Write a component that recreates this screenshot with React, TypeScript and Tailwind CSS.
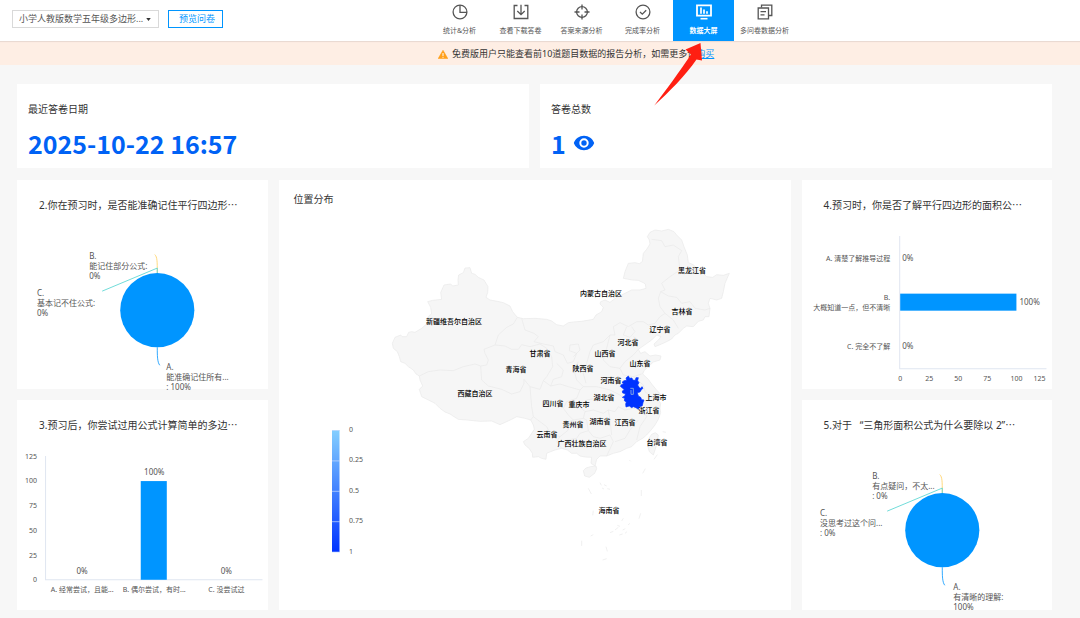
import React from "react";

const NAV = [
  { label: "统计&分析", icon: "pie" },
  { label: "查看下载答卷", icon: "download" },
  { label: "答案来源分析", icon: "target" },
  { label: "完成率分析", icon: "check" },
  { label: "数据大屏", icon: "screen", active: true },
  { label: "多问卷数据分析", icon: "docs" },
];

function NavIcon({ name }: { name: string }) {
  return (
    <svg viewBox="0 0 16 16" className="size-4" fill="none" stroke="currentColor" strokeWidth="1.3" aria-hidden="true">
      {name === "pie" && (
        <>
          <circle cx="8" cy="8" r="6.9" />
          <path d="M8 1v7.3h7" />
        </>
      )}
      {name === "download" && (
        <>
          <path d="M4.5 1.5H1.2v13h13.6v-13h-3.3" />
          <path d="M8 .8v9.6M4.3 7l3.7 3.6L11.700 7" />
        </>
      )}
      {name === "target" && (
        <>
          <circle cx="8" cy="8" r="5.4" />
          <path d="M8 .5v5M8 10.500v5M.5 8h5M10.500 8h5" />
        </>
      )}
      {name === "check" && (
        <>
          <circle cx="8" cy="8" r="6.9" />
          <path d="M5 8l2.300 2.200L11.200 6.200" />
        </>
      )}
      {name === "screen" && (
        <>
          <path d="M1 1.300h14v10.400H1z" strokeWidth="1.8" />
          <path d="M5 3.600v6.200M8 5.400v4.400M11 7.200v2.600" strokeWidth="1.700" />
          <path d="M4.500 14.700h7" strokeWidth="1.6" />
        </>
      )}
      {name === "docs" && (
        <>
          <path d="M4.500 3.500V1.200h10.300v10.300h-3" />
          <path d="M1.200 4h10.300v10.800H1.200z" />
          <path d="M3.500 7.600h5.500M3.500 10.800h4" />
        </>
      )}
    </svg>
  );
}

function Header() {
  return (
    <header className="relative z-10 flex h-[41px] items-start bg-white shadow">
      <div className="flex w-[429px] shrink-0 items-center gap-[9px] pt-[10px] pl-3">
        <div className="relative">
          <select
            aria-label="选择问卷"
            className="block h-[18px] w-[147px] appearance-none border border-[#d9d9d9] bg-white pl-[6px] text-[9px] leading-4 text-[#555]"
          >
            <option>小学人教版数学五年级多边形...</option>
          </select>
          <svg viewBox="0 0 6 4" className="pointer-events-none absolute top-[8px] right-[8px] h-[3px] w-[5px]" fill="#333" aria-hidden="true">
            <path d="M0 0h6L3 4z" />
          </svg>
        </div>
        <button type="button" className="h-[18px] w-[55px] border border-[#0095ff] pl-[3px] text-[9px] leading-4 text-[#0095ff]">
          预览问卷
        </button>
      </div>
      <nav className="flex">
        {NAV.map((item) => (
          <a
            key={item.label}
            href="#"
            className={
              item.active
                ? "flex h-[41px] w-[61px] flex-col items-center bg-[#0095ff] pt-1 text-[7px] leading-[10px] font-bold whitespace-nowrap text-white"
                : "flex h-[41px] w-[61px] flex-col items-center pt-1 text-[7px] leading-[10px] whitespace-nowrap text-[#555]"
            }
          >
            <NavIcon name={item.icon} />
            <span className="mt-[6px]">{item.label}</span>
          </a>
        ))}
      </nav>
    </header>
  );
}

function Banner() {
  return (
    <div className="relative z-20 flex h-6 items-center bg-[#feeee4] pt-[2px] pl-[438px] text-[9px] whitespace-nowrap text-[#333] shadow-[inset_0_2px_1px_-1px_#e8d8d0]">
      <svg viewBox="0 0 10 9" className="h-[9px] w-[10px]" aria-hidden="true">
        <path d="M5 .3 9.800 8.600H.2z" fill="#ff9f1a" stroke="#ff9f1a" strokeWidth=".6" strokeLinejoin="round" />
        <path d="M5 3v3M5 6.800v1" stroke="#fff" strokeWidth="1" />
      </svg>
      <p className="pl-1">
        免费版用户只能查看前10道题目数据的报告分析，如需更多请
        <a href="#" className="text-[#0095ff] underline">
          购买
        </a>
      </p>
      <svg viewBox="654 42 50 64" className="absolute top-px left-[654px] h-16 w-[50px]" aria-hidden="true">
        <path d="M700.500 43 685.500 49.500 691 54.500C680 71 666 90 654.300 105.500 669 92 685 76 696.500 59.500L702 60.500z" fill="#ff1f12" />
      </svg>
    </div>
  );
}

function Stat({ label, children }: { label: string; children: React.ReactNode }) {
  return (
    <section className="bg-white pt-[17px] pb-[9px] pl-[11px]">
      <h2 className="text-[10px] leading-4 text-[#333]">{label}</h2>
      <div className="mt-[10px] flex items-center gap-[7px] font-['Noto_Sans_CJK_SC',sans-serif] text-[25px] leading-8 font-bold text-[#0062f5]">
        {children}
      </div>
    </section>
  );
}

function ChartCard({ title, children }: { title: string; children: React.ReactNode }) {
  return (
    <section className="bg-white pt-[17px]">
      <h2 className="mb-[7px] truncate pl-[22px] text-[10px] leading-4 text-[#333]">{title}</h2>
      {children}
    </section>
  );
}

type PieLabel = { x: number; lines: string[] };

function PieChart({ a, b, c }: { a: PieLabel; b: PieLabel; c: PieLabel }) {
  const rows = [
    { ...b, y: 39 },
    { ...c, y: 76 },
    { ...a, y: 150 },
  ];
  return (
    <svg viewBox="0 0 250 169" className="block w-full overflow-visible text-[8px]" role="img">
      <path d="M137.500 34.500C140 37 140 41 140 53" fill="none" stroke="#ffd05c" strokeWidth=".8" />
      <path d="M140 53V48L85 71" fill="none" stroke="#4ed3d0" strokeWidth=".8" />
      <path d="M140 127C140 135 140 142 142.500 145" fill="none" stroke="#0095ff" strokeWidth=".8" />
      <circle cx="140" cy="90" r="37" fill="#0095ff" />
      {rows.map((row) => (
        <text key={row.y} fill="#555">
          {row.lines.map((line, i) => (
            <tspan key={i} x={row.x} y={row.y + i * 10}>
              {line}
            </tspan>
          ))}
        </text>
      ))}
    </svg>
  );
}

function ColumnChart() {
  const data = [
    { name: "A. 经常尝试，且能...", value: 0 },
    { name: "B. 偶尔尝试，有时...", value: 100 },
    { name: "C. 没尝试过", value: 0 },
  ];
  return (
    <svg viewBox="0 0 250 169" className="block w-full overflow-visible text-[8px]" fill="#555" role="img">
      <path d="M28.500 16v123.500H245" fill="none" stroke="#e0e6f1" />
      {[0, 25, 50, 75, 100, 125].map((t) => (
        <text key={t} x="20" y={142 - t * 0.988} textAnchor="end" className="text-[7px]">
          {t}
        </text>
      ))}
      {data.map((d, i) => (
        <g key={d.name} textAnchor="middle">
          <rect x={123.5 + (i - 1) * 72} y={139.5 - d.value * 0.985} width="26" height={d.value * 0.985} fill="#0095ff" />
          <text x={65 + i * 72} y={134 - d.value * 0.988}>
            {d.value}%
          </text>
          <text x={65 + i * 72} y="152" className="text-[7px]">
            {d.name}
          </text>
        </g>
      ))}
    </svg>
  );
}

function RowChart() {
  const data = [
    { lines: ["A. 清楚了解推导过程"], value: 0 },
    { lines: ["B.", "大概知道一点，但不清晰"], value: 100 },
    { lines: ["C. 完全不了解"], value: 0 },
  ];
  const ticks = [
    [0, 98],
    [25, 127],
    [50, 156],
    [75, 185],
    [100, 214],
    [125, 237],
  ];
  return (
    <svg viewBox="0 0 250 169" className="block w-full overflow-visible text-[8px]" fill="#555" role="img">
      <path d="M97.500 16v132.500H244" fill="none" stroke="#e0e6f1" />
      {ticks.map(([t, x]) => (
        <text key={t} x={x} y="161" textAnchor="middle" className="text-[7px]">
          {t}
        </text>
      ))}
      {data.map((d, i) => (
        <g key={i}>
          <rect x="98" y={73.5 + (i - 1) * 44} width={d.value * 1.16} height="17" fill="#0095ff" />
          <text x={100 + d.value * 1.17} y={85 + (i - 1) * 44}>
            {d.value}%
          </text>
          {d.lines.map((line, j) => (
            <text key={line} x="88" y={85 + (i - 1) * 44 + (j - (d.lines.length - 1) / 2) * 10} textAnchor="end" className="text-[7px]">
              {line}
            </text>
          ))}
        </g>
      ))}
    </svg>
  );
}

const PROVINCES: [string, number, number][] = [
  ["黑龙江省", 692, 270],
  ["内蒙古自治区", 601, 293],
  ["吉林省", 682, 311],
  ["辽宁省", 660, 329],
  ["新疆维吾尔自治区", 454, 321],
  ["河北省", 628, 342],
  ["甘肃省", 540, 353],
  ["山西省", 605, 353],
  ["山东省", 640, 363],
  ["青海省", 516, 369],
  ["陕西省", 583, 368],
  ["河南省", 611, 380],
  ["西藏自治区", 475, 393],
  ["湖北省", 604, 397],
  ["上海市", 656, 397],
  ["四川省", 553, 403],
  ["重庆市", 579, 404],
  ["浙江省", 649, 410],
  ["贵州省", 573, 424],
  ["湖南省", 600, 421],
  ["江西省", 625, 422],
  ["云南省", 547, 434],
  ["广西壮族自治区", 582, 443],
  ["台湾省", 657, 442],
  ["海南省", 609, 510],
];

const MAINLAND =
  "M37 370L45 352 62 345 66 350 80 350 86 337 95 335 105 337 125 325 142 310 148 298 146 288 155 282 152 262 143 245 158 241 185 238 182 218 192 195 212 192 218 198 235 195 234 180 236 165 250 158 255 144 270 143 275 160 285 163 295 172 312 180 324 200 323 218 318 232 330 240 352 244 370 248 390 258 398 275 412 292 430 296 465 295 500 298 515 303 530 314 550 318 565 308 580 306 605 304 640 298 648 285 665 275 670 262 660 252 662 245 675 240 690 247 710 232 725 225 755 210 780 210 798 205 796 192 790 188 775 181 757 180 730 175 735 155 745 130 765 128 778 131 787 125 790 100 800 88 810 72 808 60 802 50 810 37 825 30 845 33 865 28 882 35 890 45 905 60 912 80 922 105 925 128 940 134 950 145 965 155 980 170 998 172 1010 164 1030 166 1048 160 1035 190 1030 215 1025 235 1010 240 990 235 985 250 990 265 987 290 975 290 970 300 955 304 940 320 920 318 910 325 895 340 885 345 875 357 860 365 845 372 825 380 822 372 835 360 843 350 830 345 815 360 798 372 775 388 782 400 795 395 810 408 826 405 843 408 840 420 820 426 805 440 792 452 788 462 805 478 815 492 828 508 843 524 828 530 815 532 835 540 842 550 840 565 842 578 835 598 825 615 815 628 800 645 788 655 770 665 755 680 740 685 720 695 700 700 680 708 660 708 650 718 645 738 633 730 635 712 615 711 600 708 590 700 575 700 562 690 545 685 525 690 512 695 500 700 498 718 485 715 475 710 458 712 457 700 448 686 435 675 430 665 445 655 455 640 463 628 460 615 452 600 435 595 410 590 395 598 380 605 360 614 335 603 300 604 260 600 235 598 222 590 210 582 195 576 180 565 165 550 145 540 125 530 118 508 128 498 120 480 118 468 108 462 100 450 85 440 75 430 62 425 58 410 52 395 40 385z";

const BORDERS = [
  "M118 468L145 455 180 450 220 452 250 440 285 432 302 438",
  "M302 438L320 435 325 420 315 400 312 388 345 375 355 345 380 322 400 312 412 292",
  "M302 438L305 480 325 498 365 508 395 522 420 515 432 490 432 478",
  "M345 375L375 378 395 388 415 388 425 374 450 380 480 372 500 385 515 410 518 440 500 470 490 482 512 498 520 478 545 470 550 450 530 430",
  "M425 295L435 330 462 340 475 350 462 365 490 372 520 378 525 395 550 405 562 430 580 425 590 400 568 392 570 375 595 372 600 390 580 410",
  "M432 478L450 500 480 508 490 482M450 500L455 560 460 590 452 600",
  "M512 498L540 492 565 500 600 510 610 500 590 480 582 450 595 425",
  "M460 590L480 605 500 620 510 640 540 650 565 630 555 610 580 600",
  "M600 510L590 535 560 545 550 565 565 585 580 600 610 595 615 575 600 560 620 540 648 535",
  "M610 500L650 500 690 510 720 525 735 540M630 395L620 430 610 460 618 490",
  "M630 395L640 375 670 365 690 345 705 345 700 320 720 308 745 320 770 305 790 305 805 315",
  "M690 345L680 385 670 420 690 440 720 445 735 425 760 405 775 388M720 445L730 465",
  "M740 320L730 345 750 352 765 335 755 320M775 360L760 350",
  "M805 315L825 310 840 290 855 280 840 260 835 235 842 215 855 210 845 190 870 170 900 150 895 110 905 92 880 75 855 80 845 62 815 58",
  "M842 215L865 228 890 232 905 250 930 245 945 265 975 270 990 265",
  "M855 280L880 300 895 325M730 465L760 470 785 462M760 470L790 495 795 515 815 532",
  "M555 680L560 660 590 655 600 640 625 632 640 650 660 655 690 645 700 665 680 708",
  "M615 575L640 570 670 580 685 570 705 575 715 560 735 570M625 632L620 600 610 595M685 570L690 600 695 645",
  "M735 570L760 565 790 570 800 590 780 620 770 660M705 665L735 655 750 630 775 600",
  "M545 685L530 665 540 650",
];

const ANHUI =
  "M745 468L749 475 756 474 758 480 766 481 768 473 775 473 773 482 777 488 773 495 778 503 782 505 786 500 789 505 784 509 780 516 772 518 775 528 782 532 785 539 792 540 789 548 787 557 779 560 775 568 768 563 760 560 755 563 748 558 738 561 737 552 739 546 733 542 734 535 727 532 735 527 736 521 728 519 727 513 733 509 727 504 721 499 724 494 731 491 726 487 732 482 740 481 738 474z";

const SEA_DASHES =
  "M625 805l9 17M640 872l-2 14M605 962v16M788 760l8-14M822 718l10-14M784 810v18M782 880l-5 16M660 788l4 8M672 794l8 4M666 804l6 3M682 806l8 2M748 720l4 4M632 948l8-4M690 938l10-4M705 930l10-8M718 945l10-3M728 930l8-4M735 940l6-5M712 916l8 3M744 915l6-5M678 980l4 14M668 1020l12-4M848 635l10 2M730 895l-5 8";

function MapCard() {
  return (
    <section className="col-span-2 col-start-2 row-span-2 row-start-1 bg-white pt-[11px]">
      <h2 className="mb-[13px] pl-[15px] text-[10px] leading-4 text-[#333]">位置分布</h2>
      <svg viewBox="279 220 512 388" className="block w-full text-[7px]" role="img">
        <defs>
          <linearGradient id="scale" x1="0" y1="0" x2="0" y2="1">
            <stop offset="0" stopColor="#84cfff" />
            <stop offset="1" stopColor="#0033ff" />
          </linearGradient>
        </defs>
        <g transform="translate(380 220) scale(.33333)" stroke="#e8e8e8" strokeWidth="2" strokeLinejoin="round" fill="#f6f6f6">
          <path d={MAINLAND} />
          <path d="M610 752L618 744 632 740 648 738 650 746 644 760 628 772 614 768z" />
          <path d="M807 655L815 643 826 638 835 645 830 675 820 705 808 695 802 675z" />
          <path d={BORDERS.join("")} fill="none" />
          <path d={SEA_DASHES} fill="none" />
          <path d={ANHUI} fill="#0033ff" stroke="#0033ff" />
          <path d="M751 505h9v18h-7v-13" fill="none" stroke="#b9d8d8" />
        </g>
        <g fill="#000" textAnchor="middle" className="font-medium">
          {PROVINCES.map(([name, x, y]) => (
            <text key={name} x={x} y={y + 2.5}>
              {name}
            </text>
          ))}
        </g>
        <rect x="332" y="430" width="7.500" height="122" fill="url(#scale)" />
        {["0", "0.25", "0.5", "0.75", "1"].map((t, i) => (
          <g key={t}>
            <path d={`M332 ${430.5 + i * 30.4}h8`} stroke="#c9ddff" strokeWidth=".7" />
            <text x="349" y={432 + i * 30.4} fill="#555">
              {t}
            </text>
          </g>
        ))}
      </svg>
    </section>
  );
}

export default function App() {
  return (
    <div className="min-h-screen bg-[#f7f7f7] font-['Noto_Sans','Noto_Sans_CJK_SC',sans-serif]">
      <Header />
      <Banner />
      <main className="flex flex-col gap-3 pt-[19px] pr-7 pb-2 pl-[17px]">
        <div className="grid grid-cols-2 gap-[11px]">
          <Stat label="最近答卷日期">2025-10-22 16:57</Stat>
          <Stat label="答卷总数">
            1
            <svg viewBox="0 0 22 16" className="h-4 w-[22px]" role="img" aria-label="查看">
              <path
                fillRule="evenodd"
                fill="#0062f5"
                d="M11 .8C6.200.8 2.400 3.800.8 8c1.600 4.200 5.400 7.200 10.200 7.200S19.600 12.200 21.200 8C19.600 3.800 15.800.8 11 .8zM11 12.700a4.700 4.700 0 1 1 0-9.400 4.700 4.700 0 0 1 0 9.400zM11 5.300a2.700 2.700 0 1 0 0 5.400 2.700 2.700 0 0 0 0-5.400z"
              />
            </svg>
          </Stat>
        </div>
        <div className="grid grid-cols-4 gap-[11px]">
          <ChartCard title="2.你在预习时，是否能准确记住平行四边形⋯">
            <PieChart
              a={{ x: 149, lines: ["A.", "能准确记住所有...", ": 100%"] }}
              b={{ x: 72, lines: ["B.", "能记住部分公式:", "0%"] }}
              c={{ x: 20, lines: ["C.", "基本记不住公式:", "0%"] }}
            />
          </ChartCard>
          <MapCard />
          <ChartCard title="4.预习时，你是否了解平行四边形的面积公⋯">
            <RowChart />
          </ChartCard>
          <ChartCard title="3.预习后，你尝试过用公式计算简单的多边⋯">
            <ColumnChart />
          </ChartCard>
          <ChartCard title={"5.对于\u00a0\u00a0\u00a0“三角形面积公式为什么要除以 2”⋯"}>
            <PieChart
              a={{ x: 151, lines: ["A.", "有清晰的理解:", "100%"] }}
              b={{ x: 70, lines: ["B.", "有点疑问，不太...", ": 0%"] }}
              c={{ x: 18, lines: ["C.", "没思考过这个问...", ": 0%"] }}
            />
          </ChartCard>
        </div>
      </main>
    </div>
  );
}
